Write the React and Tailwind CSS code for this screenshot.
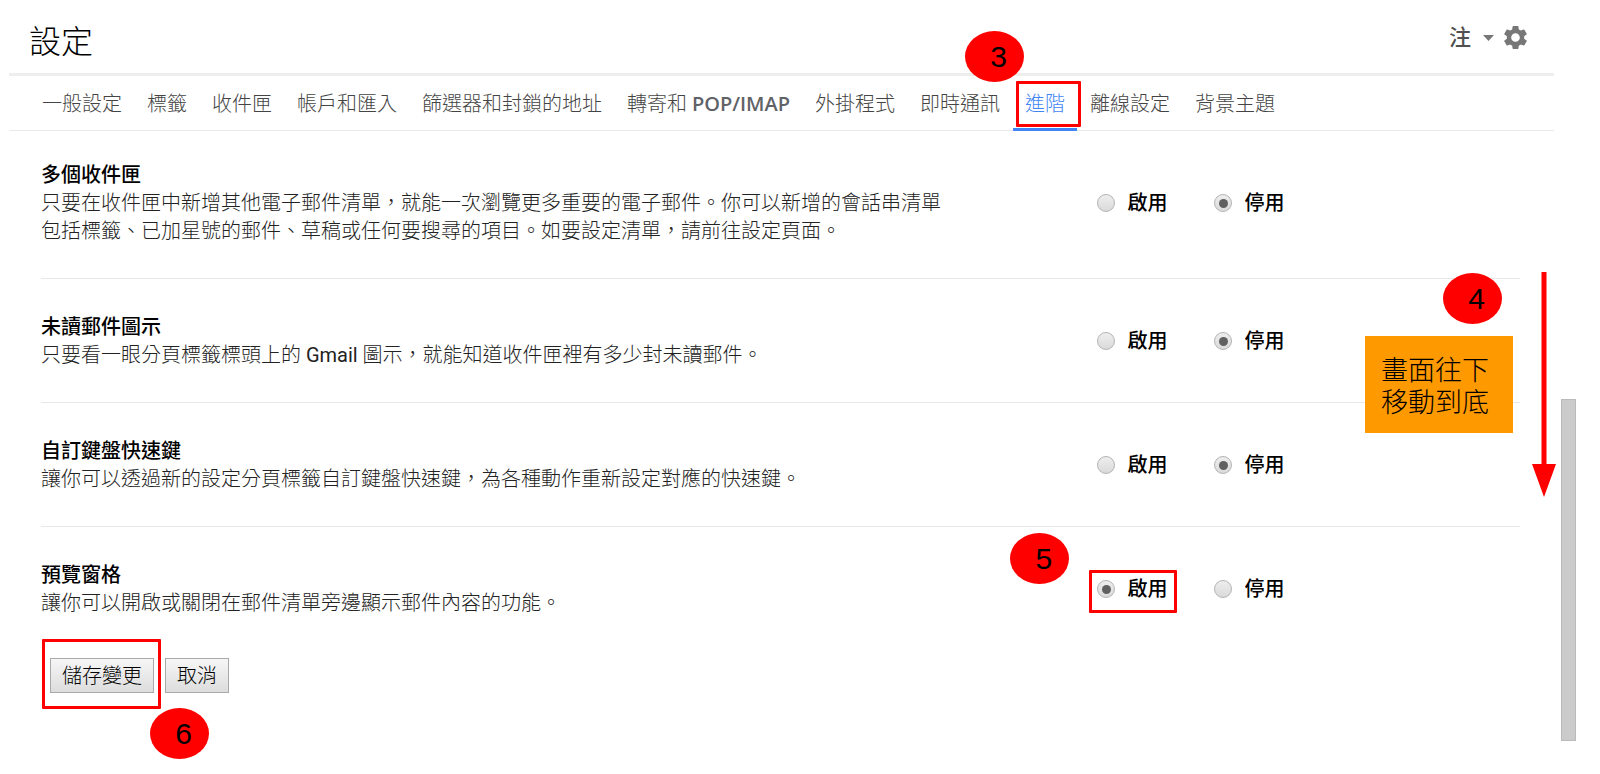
import { useState } from "react";
import { MdSettings } from "react-icons/md";

const tabs = [
    "一般設定",
    "標籤",
    "收件匣",
    "帳戶和匯入",
    "篩選器和封鎖的地址",
    "轉寄和 POP/IMAP",
    "外掛程式",
    "即時通訊",
    "進階",
    "離線設定",
    "背景主題",
];

const settings = [
    {
        id: "multiple-inboxes",
        title: "多個收件匣",
        description:
            "只要在收件匣中新增其他電子郵件清單，就能一次瀏覽更多重要的電子郵件。你可以新增的會話串清單包括標籤、已加星號的郵件、草稿或任何要搜尋的項目。如要設定清單，請前往設定頁面。",
        enabled: false,
    },
    {
        id: "unread-icon",
        title: "未讀郵件圖示",
        description: (
            <>
                只要看一眼分頁標籤標頭上的 <span className="font-normal">Gmail</span> 圖示，就能知道收件匣裡有多少封未讀郵件。
            </>
        ),
        enabled: false,
    },
    {
        id: "shortcuts",
        title: "自訂鍵盤快速鍵",
        description: "讓你可以透過新的設定分頁標籤自訂鍵盤快速鍵，為各種動作重新設定對應的快速鍵。",
        enabled: false,
    },
    {
        id: "preview-pane",
        title: "預覽窗格",
        description: "讓你可以開啟或關閉在郵件清單旁邊顯示郵件內容的功能。",
        enabled: true,
        step: 5,
    },
];

// Numbered red marker, placed by the className of the caller
const Step = ({ number, className }) => (
    <span
        className={`absolute z-10 flex h-[51px] w-[59px] items-center justify-center rounded-[50%] bg-[#ff0000] pl-2 font-['Liberation_Sans',sans-serif] text-[30px] font-normal text-black ${className}`}
    >
        {number}
    </span>
);

const Outline = ({ className }) => (
    <span className={`pointer-events-none absolute rounded-[1px] border-3 border-[#ff0000] ${className}`} />
);

const Option = ({ name, label, checked, onChange, step }) => (
    <label className="relative flex items-center gap-3 text-xl font-medium text-black">
        <input
            type="radio"
            name={name}
            checked={checked}
            onChange={onChange}
            className="flex size-[18px] appearance-none items-center justify-center rounded-full border border-[#b4b4b4] bg-linear-to-b from-[#eeeeee] to-[#dadada] before:size-[9px] before:rounded-full checked:before:bg-[#606060]"
        />
        {label}
        {step && <Outline className="-top-[5px] -right-[10px] -bottom-[10px] -left-2" />}
        {step && <Step number={step} className="-top-[42px] -left-[87px]" />}
    </label>
);

const SettingRow = ({ setting }) => {
    const [enabled, setEnabled] = useState(setting.enabled);

    return (
        <section className="grid grid-cols-[5fr_2fr] items-center border-b border-[#e8e8e8] pt-[34px] pb-[33px] first:pt-[30px] last:border-b-0 last:pb-0">
            <div className="max-w-[910px] text-xl leading-7">
                <h2 className="font-medium text-black">{setting.title}</h2>
                <p className="font-light text-[#222222]">{setting.description}</p>
            </div>
            <div className="flex gap-[47px]">
                <Option
                    name={setting.id}
                    label="啟用"
                    checked={enabled}
                    onChange={() => setEnabled(true)}
                    step={setting.step}
                />
                <Option name={setting.id} label="停用" checked={!enabled} onChange={() => setEnabled(false)} />
            </div>
        </section>
    );
};

const App = () => {
    return (
        <div className="relative flex min-h-screen bg-white pl-[9px] font-['Roboto','Noto_Sans_CJK_TC',sans-serif]">
            <main className="min-w-0 flex-1">
                <header className="flex h-[76px] items-center justify-between border-b-3 border-[#eeeeee] pt-[2px] pr-6 pl-5">
                    <h1 className="pt-2 text-[32px] font-light text-black">設定</h1>
                    <div className="flex items-center gap-[7px]">
                        <button type="button" className="flex items-center gap-3 text-[22px] font-medium text-[#505050]">
                            注
                            <svg className="h-[6px] w-[11px] fill-[#777777]" viewBox="0 0 11 6">
                                <path d="M0 0h11L5.5 6z" />
                            </svg>
                        </button>
                        <button type="button" aria-label="設定">
                            <MdSettings className="size-[29px] text-[#777777]" />
                        </button>
                    </div>
                </header>

                <nav className="flex h-[55px] gap-px border-b border-[#e8eaed] pl-[21px] text-xl">
                    {tabs.map((tab) => {
                        const active = tab === "進階";
                        return (
                            <a
                                key={tab}
                                href="#"
                                className={`relative flex items-center px-3 pt-[2px] font-light whitespace-pre ${active ? "text-[#4285f4]" : "text-[#444444]"}`}
                            >
                                {tab.replace("POP/IMAP", "")}
                                {tab.includes("POP/IMAP") && (
                                    <span className="font-['Open_Sans',sans-serif] font-semibold text-[#5f6368]">POP/IMAP</span>
                                )}
                                {active && <span className="absolute inset-x-0 -bottom-px h-[3px] bg-[#4285f4]" />}
                                {active && <Outline className="top-[5px] -right-1 bottom-[3px] left-[3px]" />}
                                {active && <Step number={3} className="-top-[45px] right-[53px]" />}
                            </a>
                        );
                    })}
                </nav>

                <form className="pr-[34px] pl-8" onSubmit={(e) => e.preventDefault()}>
                    <div>
                        {settings.map((setting) => (
                            <SettingRow key={setting.id} setting={setting} />
                        ))}
                    </div>

                    <div className="mt-[41px] flex gap-[11px] pl-[9px] text-xl font-light text-black">
                        <div className="relative">
                            <button
                                type="submit"
                                className="h-[35px] border border-[#a9a9a9] bg-linear-to-b from-[#f6f6f6] to-[#dddddd] px-[11px]"
                            >
                                儲存變更
                            </button>
                            <Outline className="-top-[19px] -right-[7px] -bottom-[16px] -left-2" />
                            <Step number={6} className="top-[50px] left-[100px]" />
                        </div>
                        <button
                            type="button"
                            className="h-[35px] border border-[#a9a9a9] bg-linear-to-b from-[#f6f6f6] to-[#dddddd] px-[11px]"
                        >
                            取消
                        </button>
                    </div>
                </form>
            </main>

            {/* Scrollbar thumb */}
            <aside className="w-[46px] pt-[399px] pl-[7px]">
                <div className="h-[342px] w-[15px] border border-[#bbbbbb] bg-[#cbcbcb]" />
            </aside>

            {/* Scroll down hint */}
            <div className="absolute top-[272px] right-11 flex w-[191px] items-start justify-between">
                <div className="relative mt-16 bg-[#ff9900] pt-[19px] pr-6 pb-[14px] pl-4 text-[27px] leading-8 font-light text-black">
                    <p>畫面往下</p>
                    <p>移動到底</p>
                    <Step number={4} className="-top-[63px] right-[11px]" />
                </div>
                <svg className="h-[225px] w-6 fill-[#ff0000]" viewBox="0 0 24 225">
                    <path d="M9.5 0h5v192H24L12 225 0 192h9.5z" />
                </svg>
            </div>
        </div>
    );
};

export default App;
